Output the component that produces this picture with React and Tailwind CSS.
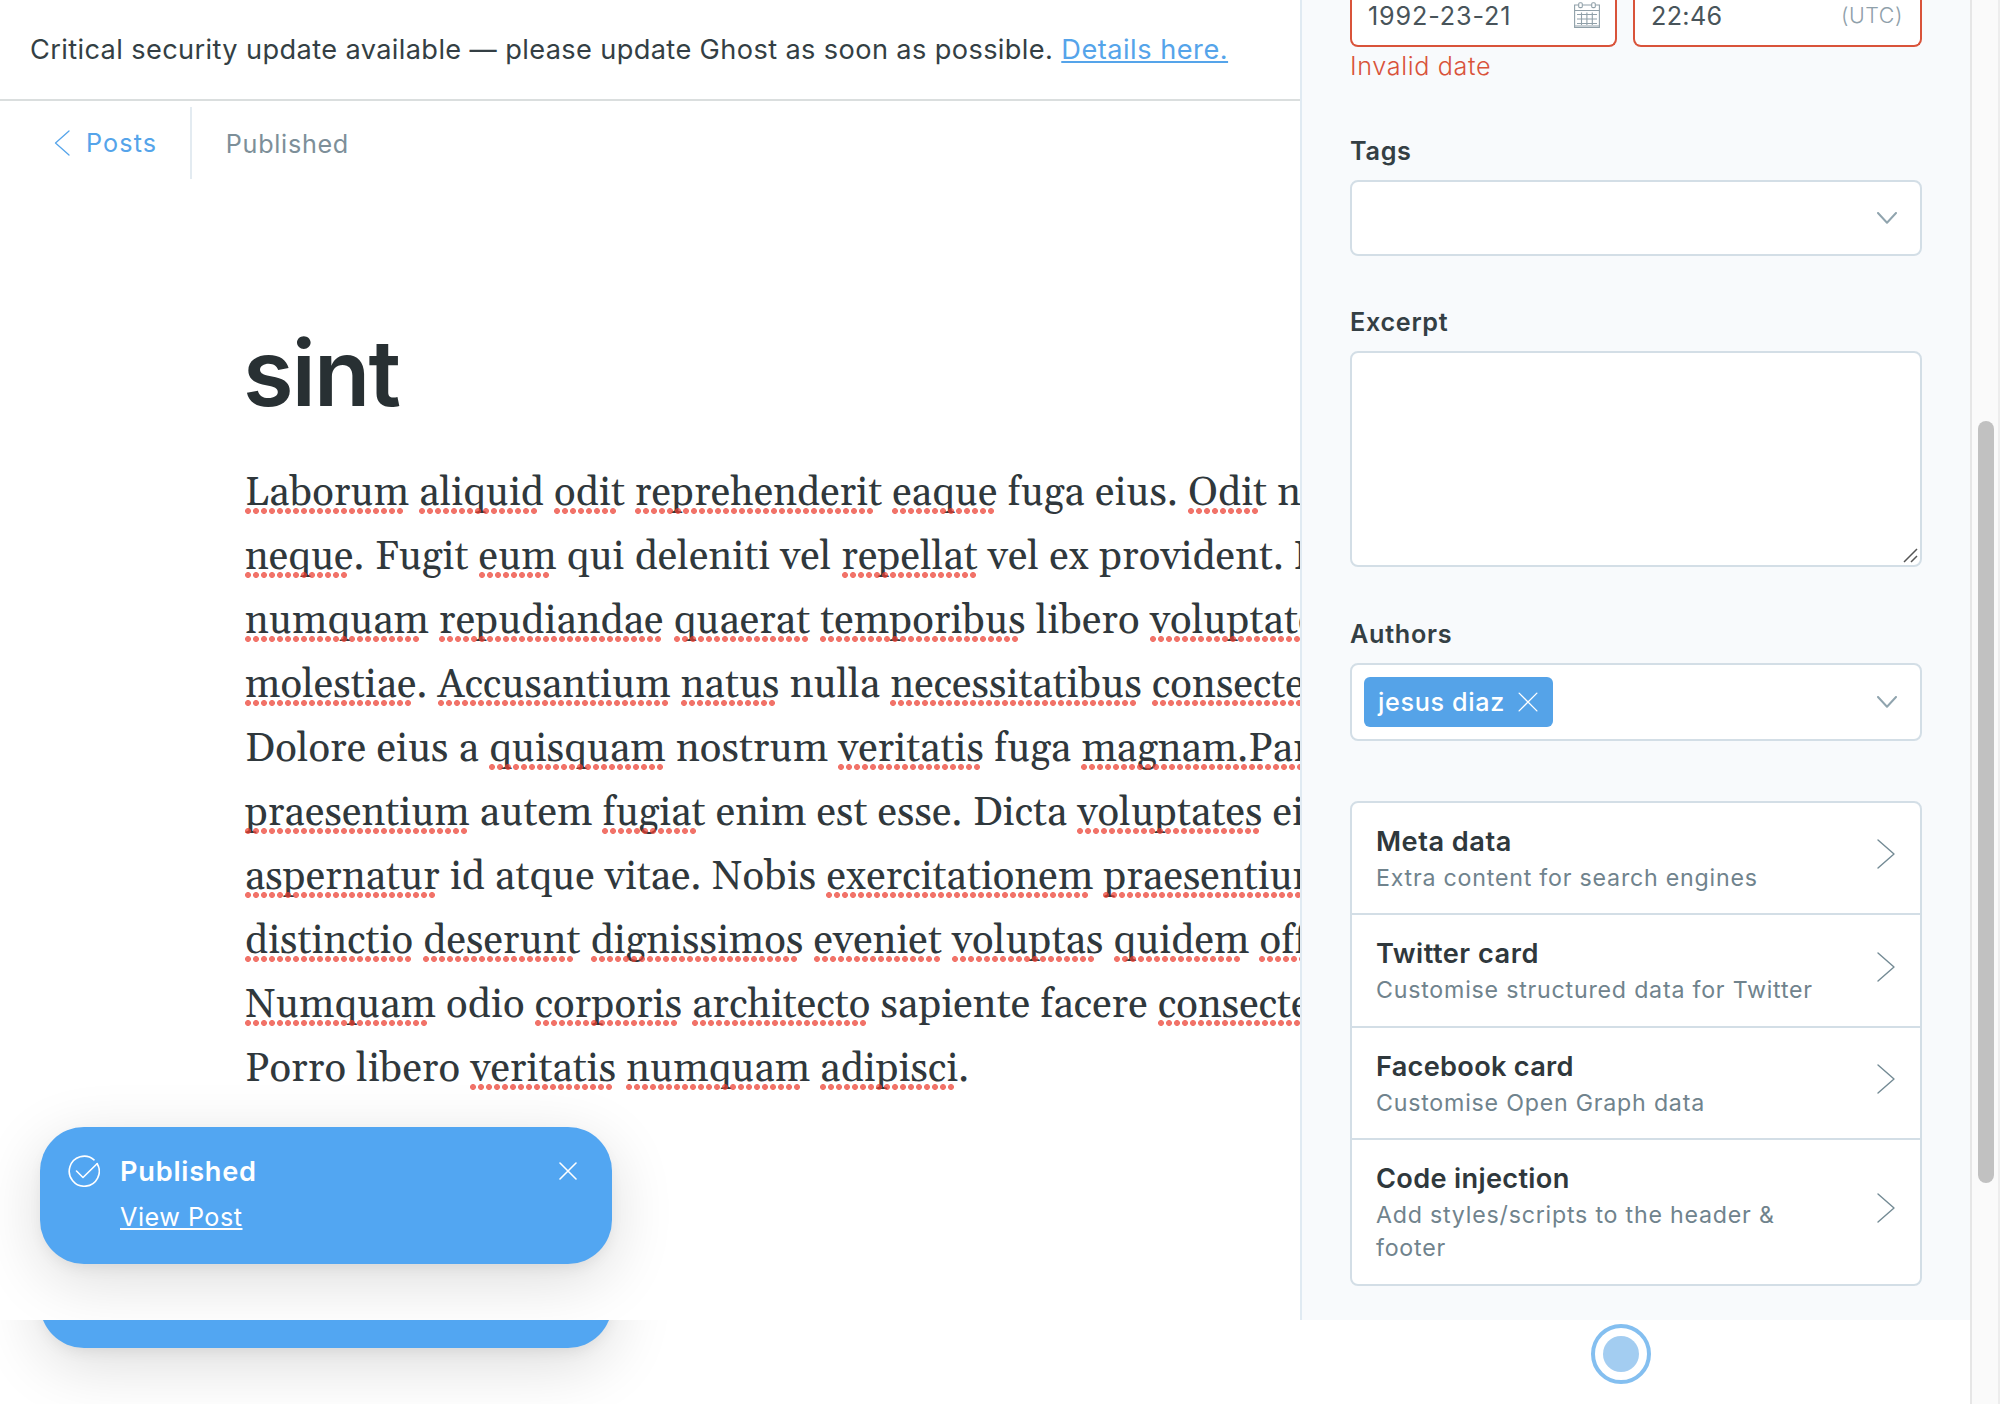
import React from "react";

/* Words wrapped in underscores are flagged by the spell checker. */
const LINES = [
  "_Laborum_ _aliquid_ _odit_ _reprehenderit_ _eaque_ fuga eius. _Odit_ n",
  "_neque_. Fugit _eum_ qui deleniti vel _repellat_ vel ex provident. N",
  "_numquam_ _repudiandae_ _quaerat_ _temporibus_ libero _voluptate_",
  "_molestiae_. _Accusantium_ _natus_ nulla _necessitatibus_ _consectet_",
  "Dolore eius a _quisquam_ nostrum _veritatis_ fuga _magnam.Pari_",
  "_praesentium_ autem _fugiat_ enim est esse. Dicta _voluptates_ ei",
  "_aspernatur_ id atque vitae. Nobis _exercitationem_ _praesentium_",
  "_distinctio_ _deserunt_ _dignissimos_ _eveniet_ _voluptas_ _quidem_ _offi_",
  "_Numquam_ odio _corporis_ _architecto_ sapiente facere _consectet_",
  "Porro libero _veritatis_ _numquam_ _adipisci_.",
];

const CARDS = [
  { title: "Meta data", text: "Extra content for search engines", size: "h-[110px]", track: "tracking-[0.5px]" },
  { title: "Twitter card", text: "Customise structured data for Twitter", size: "h-[113px] border-t-2", track: "tracking-[0.5px]" },
  { title: "Facebook card", text: "Customise Open Graph data", size: "h-[112px] border-t-2", track: "tracking-[0.27px]" },
  { title: "Code injection", text: "Add styles/scripts to the header & footer", size: "h-[146px] border-t-2", track: "tracking-[0.32px]" },
];

function Line({ text }) {
  return (
    <div className="h-16 whitespace-pre">
      {text.split("_").map((part, i) =>
        i % 2 ? (
          <span
            key={i}
            className="relative inline-block after:absolute after:left-0 after:top-[46px] after:h-[6px] after:w-[round(down,100%,8px)] after:bg-[radial-gradient(circle_at_3px_3px,rgba(236,61,47,0.72)_2.6px,transparent_3.3px)] after:bg-[length:8px_6px] after:bg-repeat-x after:content-['']"
          >
            {part}
          </span>
        ) : (
          part
        )
      )}
    </div>
  );
}

function Cross({ className, width }) {
  return (
    <svg className={className} viewBox="0 0 18 18" fill="none" stroke="currentColor" strokeWidth={width} strokeLinecap="round">
      <path d="M1 1 17 17M17 1 1 17" />
    </svg>
  );
}

function ChevronDown() {
  return (
    <svg className="h-3 w-5 text-[#90a4ae]" viewBox="0 0 20 12" fill="none" stroke="currentColor" strokeWidth="2" strokeLinecap="round" strokeLinejoin="round">
      <path d="M1 1 10 10.7 19 1" />
    </svg>
  );
}

function Calendar() {
  return (
    <svg className="h-[27px] w-[26px] text-[#90a0a9]" viewBox="0 0 26 27" fill="none" stroke="currentColor" strokeWidth="1.1">
      <path d="M4.500 3H.600v22.500h24.800V3h-3.900M8.500 3h9M.6 8.500h24.800M.6 24h24.800" />
      <rect x="4.700" y=".8" width="3.600" height="4.800" rx="1.200" />
      <rect x="17.700" y=".8" width="3.600" height="4.800" rx="1.200" />
      <path d="M3 12.500h20M3 17h20M3 21.500h20M7.500 10.500v12.500M12.900 10.500v12.500M18.300 10.500v12.500" />
    </svg>
  );
}

function Label({ children, className }) {
  return <div className={"text-[25.2px] leading-9 font-semibold tracking-[0.7px] text-[#343f44] " + className}>{children}</div>;
}

function Editor() {
  return (
    <main className="w-[1300px] shrink-0 overflow-hidden">
      <div className="flex h-[101px] items-center border-b-2 border-[#dadede] pt-px pl-[30px] text-[27.2px] whitespace-pre text-[#343f44]">
        <span className="tracking-[0.374px]">Critical security update available — please update Ghost as soon as possible. </span>
        <a className="tracking-[0.5px] text-[#55a4ea] underline decoration-2 underline-offset-[2px]">Details here.</a>
      </div>
      <nav className="flex h-[84px] items-center pl-[54px] text-[25.2px]">
        <svg className="h-[26px] w-4 text-[#55a4ea]" viewBox="0 0 16 26" fill="none" stroke="currentColor" strokeWidth="1.3" strokeLinecap="round" strokeLinejoin="round">
          <path d="M15 1 1.500 13 15 25" />
        </svg>
        <span className="ml-[16px] pt-0.5 tracking-[1.1px] text-[#55a4ea]">Posts</span>
        <div className="ml-auto h-[72px] w-0.5 bg-[#e3ebf1]" />
        <span className="mr-[951px] ml-[34px] pt-[3px] tracking-[0.7px] text-[#7d8f99]">Published</span>
      </nav>
      <h1 className="mt-[138px] pl-[243px] text-[92px] leading-[100px] font-semibold tracking-[-1.8px] text-[#283033]">sint</h1>
      <div className="mt-[39px] pl-[245px] font-[Gelasio,Georgia,'Liberation_Serif',serif] text-[40px] leading-[64px] tracking-[0.18px] text-[#30383c] [word-spacing:0.3px]">
        {LINES.map((l) => (
          <Line key={l} text={l} />
        ))}
      </div>
    </main>
  );
}

function Settings() {
  return (
    <aside className="flex-1 border-l-2 border-[#e0eaf2] bg-[#f8fafc] px-12">
      <div className="flex h-[47px] gap-[16px] text-[25.2px] text-[#48545a]">
        <div className="flex w-[267px] items-center justify-between rounded-b-lg border-2 border-t-0 border-[#d9533a] bg-white pr-[15px] pb-[14px] pl-[16px]">
          <span className="pt-0.5 tracking-[0.85px]">1992-23-21</span>
          <Calendar />
        </div>
        <div className="flex flex-1 items-center justify-between rounded-b-lg border-2 border-t-0 border-[#d9533a] bg-white pr-[17px] pb-[14px] pl-[16px]">
          <span className="pt-0.5 tracking-[0.3px]">22:46</span>
          <span className="text-[21.4px] font-light tracking-[0.57px] text-[#8fa0aa]">(UTC)</span>
        </div>
      </div>
      <div className="mt-px text-[25.2px] leading-9 font-light tracking-[0.64px] text-[#d9533a]">Invalid date</div>

      <Label className="mt-[49px]">Tags</Label>
      <div className="mt-[11px] flex h-[76px] items-center justify-end rounded-lg border-2 border-[#d3dee6] bg-white pr-[23px]">
        <ChevronDown />
      </div>

      <Label className="mt-[48px]">Excerpt</Label>
      <div className="mt-[11px] flex h-[216px] items-end justify-end rounded-lg border-2 border-[#d3dee6] bg-white p-[2px]">
        <svg className="h-[15px] w-[15px] text-[#555]" viewBox="0 0 15 15" fill="none" stroke="currentColor" strokeWidth="1.500">
          <path d="M1 14 14 1M8 14 14 8" />
        </svg>
      </div>

      <Label className="mt-[49px]">Authors</Label>
      <div className="mt-[11px] flex h-[78px] items-center justify-between rounded-lg border-2 border-[#d3dee6] bg-white pr-[23px] pl-[12px]">
        <div className="flex h-[50px] w-[189px] items-center justify-between rounded-md bg-[#55a3e8] pr-[15px] pl-[14px] text-[25.2px] font-medium text-white">
          <span className="pt-px tracking-[0.65px]">jesus diaz</span>
          <Cross className="h-5 w-5" width="1.2" />
        </div>
        <ChevronDown />
      </div>

      <div className="mt-[60px] rounded-lg border-2 border-[#d3dee6] bg-white">
        {CARDS.map((c) => (
          <div key={c.title} className={"flex items-center justify-between border-[#d3dee6] pr-[25px] pl-6 " + c.size}>
            <div className="w-[470px] pt-0.5">
              <div className={"text-[27.2px] leading-9 font-semibold text-[#2f383c] " + c.track}>{c.title}</div>
              <div className="mt-0.5 text-[23.2px] leading-[33px] tracking-[0.78px] text-[#70838d]">{c.text}</div>
            </div>
            <svg className="mb-2 h-[30px] w-[18px] text-[#738a94]" viewBox="0 0 18 30" fill="none" stroke="currentColor" strokeWidth="1.4" strokeLinecap="round" strokeLinejoin="round">
              <path d="M1 1 17 15 1 29" />
            </svg>
          </div>
        ))}
      </div>
    </aside>
  );
}

function Toast({ className }) {
  return (
    <div
      className={
        "absolute left-10 flex h-[137px] w-[572px] items-start rounded-[44px] bg-[#52a6f2] pt-7 pr-[35px] pl-7 text-white shadow-[0_6px_16px_-4px_rgba(0,0,0,0.08),0_16px_64px_rgba(0,0,0,0.14)] " +
        className
      }
    >
      <svg className="h-8 w-8" viewBox="0 0 32 32" fill="none" stroke="currentColor" strokeWidth="1.6" strokeLinecap="round" strokeLinejoin="round">
        <path d="M26 4.800A15 15 0 1 0 29.300 8.800" />
        <path d="M8.500 16 15 22.500 29.300 8.500" />
      </svg>
      <div className="ml-5 flex flex-col">
        <div className="-mt-px text-[27.2px] leading-9 font-semibold tracking-[0.75px]">Published</div>
        <a className="mt-[9px] text-[25.2px] leading-9 tracking-[0.5px] underline decoration-2 underline-offset-[2px]">View Post</a>
      </div>
      <Cross className="mt-[7px] ml-auto h-[18px] w-[18px]" width="1.6" />
    </div>
  );
}

export default function App() {
  return (
    <div className="flex h-[1404px] w-[2000px] overflow-hidden bg-white font-[Inter,sans-serif]">
      <div className="flex w-[1970px] flex-col">
        <div className="relative flex h-[1320px] overflow-hidden">
          <Editor />
          <Settings />
          <Toast className="top-[1127px]" />
        </div>
        <div className="relative flex h-[84px] overflow-hidden">
          <Toast className="-top-[109px]" />
          <div className="mt-1 ml-[1591px] flex h-[60px] w-[60px] items-center justify-center rounded-full border-4 border-[#84bff0]">
            <div className="h-9 w-9 rounded-full bg-[#a3cdf1]" />
          </div>
        </div>
      </div>
      <div className="flex w-[30px] border-r-2 border-l-2 border-r-[#ededed] border-l-[#e6e6e6] bg-[#fafafa] pt-[421px] pl-[6px]">
        <div className="h-[762px] w-4 rounded-full bg-[#c1c1c1]" />
      </div>
    </div>
  );
}
